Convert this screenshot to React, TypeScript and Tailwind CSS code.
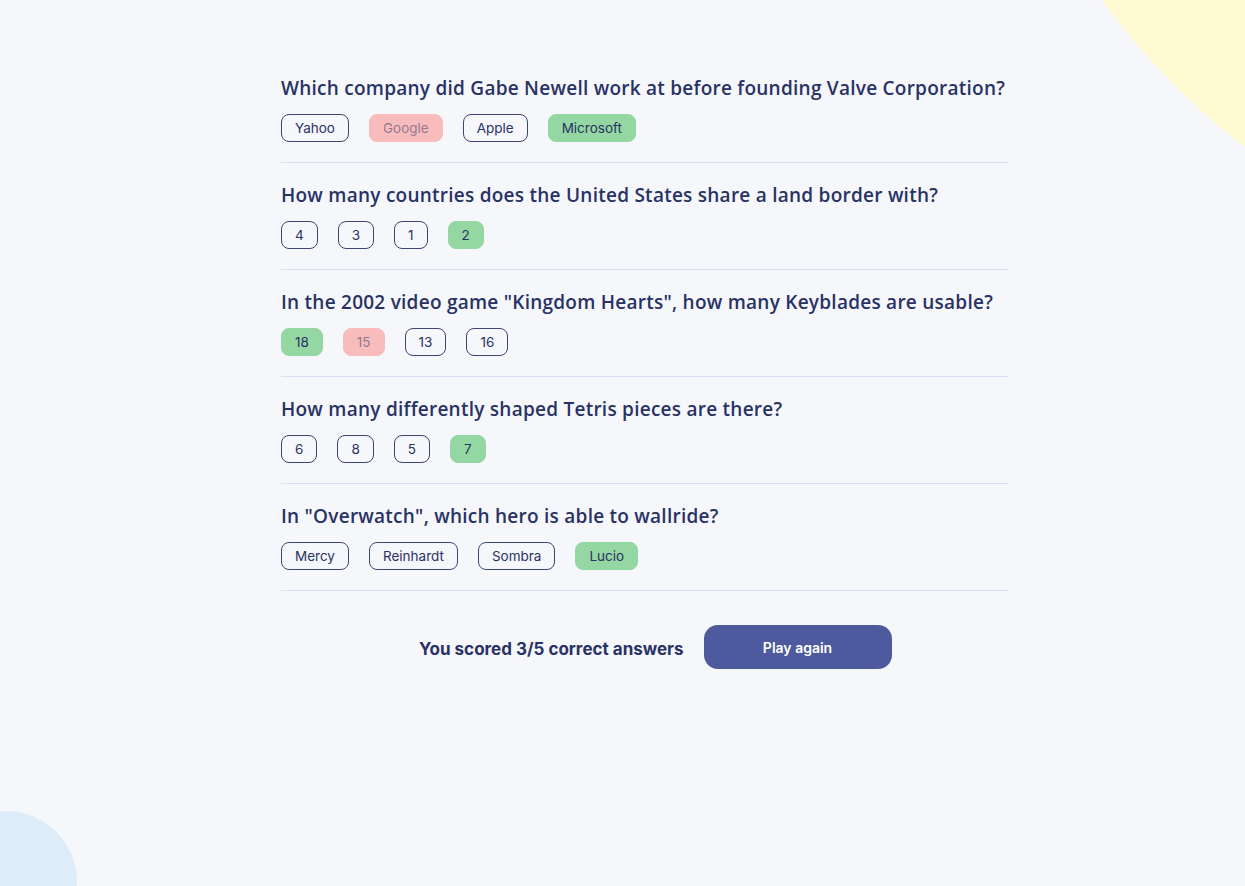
import React from 'react';

type Answer = { text: string; state?: 'correct' | 'wrong' };

const questions: { q: string; answers: Answer[] }[] = [
  {
    q: 'Which company did Gabe Newell work at before founding Valve Corporation?',
    answers: [{ text: 'Yahoo' }, { text: 'Google', state: 'wrong' }, { text: 'Apple' }, { text: 'Microsoft', state: 'correct' }],
  },
  {
    q: 'How many countries does the United States share a land border with?',
    answers: [{ text: '4' }, { text: '3' }, { text: '1' }, { text: '2', state: 'correct' }],
  },
  {
    q: 'In the 2002 video game "Kingdom Hearts", how many Keyblades are usable?',
    answers: [{ text: '18', state: 'correct' }, { text: '15', state: 'wrong' }, { text: '13' }, { text: '16' }],
  },
  {
    q: 'How many differently shaped Tetris pieces are there?',
    answers: [{ text: '6' }, { text: '8' }, { text: '5' }, { text: '7', state: 'correct' }],
  },
  {
    q: 'In "Overwatch", which hero is able to wallride?',
    answers: [{ text: 'Mercy' }, { text: 'Reinhardt' }, { text: 'Sombra' }, { text: 'Lucio', state: 'correct' }],
  },
];

const AnswerPill: React.FC<{ a: Answer }> = ({ a }) => {
  const base = 'px-[13px] py-[5px] rounded-lg text-[13.5px] leading-[16px] border';
  if (a.state === 'correct') {
    return <span className={`${base} bg-[#94D7A2] border-[#94D7A2] text-[#293264]`}>{a.text}</span>;
  }
  if (a.state === 'wrong') {
    return <span className={`${base} bg-[#F8BCBC] border-[#F8BCBC] text-[#293264]/50`}>{a.text}</span>;
  }
  return <span className={`${base} border-[#3d4670] text-[#293264]`}>{a.text}</span>;
};

export default function App() {
  return (
    <div className="relative h-[886px] overflow-hidden bg-[#F5F7FB] font-['Inter',sans-serif]">
      {/* blobs */}
      <div className="absolute left-[968px] top-[-1121px] w-[1414px] h-[1414px] rounded-full bg-[#FFFAD1]" />
      <div className="absolute left-[-65px] top-[811px] w-[142px] h-[142px] rounded-full bg-[#DEEBF8]" />

      <div className="relative ml-[281px] w-[727px] pt-[56px]">
        {questions.map((item) => (
          <div key={item.q} className="pt-5 pb-5 border-b border-[#DBDEF0]">
            <h2 className="whitespace-nowrap font-['Open_Sans',sans-serif] font-semibold text-[19px] tracking-[0.25px] leading-[24px] text-[#293264]">
              {item.q}
            </h2>
            <div className="mt-[14px] flex gap-[20px]">
              {item.answers.map((a) => (
                <AnswerPill key={a.text} a={a} />
              ))}
            </div>
          </div>
        ))}

        <div className="mt-[34px] pl-[138px] flex items-center gap-5">
          <p className="font-bold text-[17px] leading-[24px] pt-[3px] text-[#293264]">You scored 3/5 correct answers</p>
          <button className="w-[188px] h-[44px] rounded-[14px] bg-[#4D5B9E] text-white text-[14px] font-semibold">
            Play again
          </button>
        </div>
      </div>
    </div>
  );
}
